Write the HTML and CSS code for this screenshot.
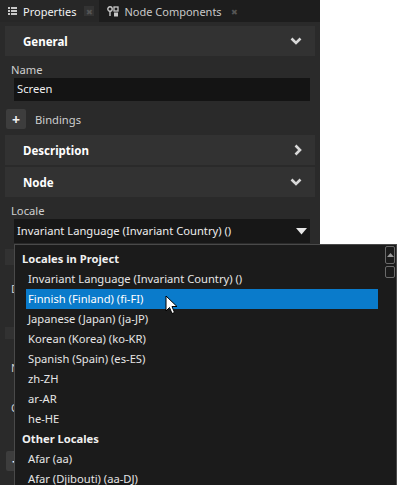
FILE: index.html
```html
<!DOCTYPE html>
<html lang="en">
<head>
    <meta charset="UTF-8">
    <meta name="viewport" content="width=device-width, initial-scale=1.0">
    <title>Properties</title>
    <link rel="stylesheet" href="styles.css">
</head>
<body>
    <div class="panel">
        <div class="tabs">
            <div class="tab active">
                <svg class="tab-icon" width="9" height="8" viewBox="0 0 9 8">
                    <rect x="0" y="0" width="2" height="2" fill="#c8c8c8"/>
                    <rect x="3" y="0" width="6" height="2" fill="#c8c8c8"/>
                    <rect x="0" y="3" width="2" height="2" fill="#c8c8c8"/>
                    <rect x="3" y="3" width="6" height="2" fill="#c8c8c8"/>
                    <rect x="0" y="6" width="2" height="2" fill="#c8c8c8"/>
                    <rect x="3" y="6" width="6" height="2" fill="#c8c8c8"/>
                </svg>
                <span class="tab-label">Properties</span>
                <span class="tab-close boxed">&#x2716;</span>
            </div>
            <div class="tab">
                <svg class="tab-icon" width="12" height="11" viewBox="0 0 12 11">
                    <circle cx="3" cy="3" r="2.2" fill="none" stroke="#c8c8c8" stroke-width="1.4"/>
                    <rect x="2.3" y="5" width="1.4" height="5" fill="#c8c8c8"/>
                    <rect x="7" y="1" width="4" height="4" fill="none" stroke="#c8c8c8" stroke-width="1.3"/>
                    <rect x="7" y="6.5" width="4" height="4" fill="#c8c8c8"/>
                </svg>
                <span class="tab-label">Node Components</span>
                <span class="tab-close">&#x2716;</span>
            </div>
        </div>

        <div class="body">
            <div class="section">
                <span>General</span>
                <svg class="chevron" width="12" height="8" viewBox="0 0 12 8"><polyline points="1.5,1.5 6,6 10.5,1.5" fill="none" stroke="#d8d8d8" stroke-width="2.6"/></svg>
            </div>
            <div class="label">Name</div>
            <div class="input">Screen</div>
            <div class="bindings">
                <span class="plus">+</span>
                <span>Bindings</span>
            </div>
            <div class="section">
                <span>Description</span>
                <svg class="chevron" width="8" height="12" viewBox="0 0 8 12"><polyline points="1.5,1.5 6,6 1.5,10.5" fill="none" stroke="#d8d8d8" stroke-width="2.6"/></svg>
            </div>
            <div class="section">
                <span>Node</span>
                <svg class="chevron" width="12" height="8" viewBox="0 0 12 8"><polyline points="1.5,1.5 6,6 10.5,1.5" fill="none" stroke="#d8d8d8" stroke-width="2.6"/></svg>
            </div>
            <div class="label">Locale</div>
            <div class="input select">
                <span>Invariant Language (Invariant Country) ()</span>
                <svg width="11" height="7" viewBox="0 0 11 7"><polygon points="0,0 11,0 5.5,6.5" fill="#e8e8e8"/></svg>
            </div>

            <!-- rows hidden behind the open dropdown -->
            <div class="hidden-block first"></div>
            <div class="label under depth">Depth</div>
            <div class="hidden-block second"></div>
            <div class="label under name">Name</div>
            <div class="label under opacity">Opacity</div>
            <div class="bindings under-bind">
                <span class="plus">+</span>
                <span>Bindings</span>
            </div>
        </div>
    </div>

    <div class="popup">
        <div class="group">Locales in Project</div>
        <div class="item">Invariant Language (Invariant Country) ()</div>
        <div class="item selected">Finnish (Finland) (fi-FI)</div>
        <div class="item">Japanese (Japan) (ja-JP)</div>
        <div class="item">Korean (Korea) (ko-KR)</div>
        <div class="item">Spanish (Spain) (es-ES)</div>
        <div class="item">zh-ZH</div>
        <div class="item">ar-AR</div>
        <div class="item">he-HE</div>
        <div class="group">Other Locales</div>
        <div class="item">Afar (aa)</div>
        <div class="item">Afar (Djibouti) (aa-DJ)</div>

        <div class="scrollbar">
            <div class="scroll-btn">
                <svg width="7" height="4" viewBox="0 0 7 4"><polygon points="0,4 7,4 3.5,0" fill="#9a9a9a"/></svg>
            </div>
            <div class="scroll-thumb"></div>
        </div>
    </div>

    <svg class="cursor" width="13" height="20" viewBox="0 0 13 20">
        <polygon points="1,1 1,16 4.5,12.5 7,18.5 9.5,17.5 7,11.5 12,11.5" fill="#ffffff" stroke="#000000" stroke-width="1"/>
    </svg>
</body>
</html>
```

FILE: styles.css
```css
body {
    margin: 0;
    background: #ffffff;
    font-family: "Noto Sans", "Open Sans", sans-serif;
    font-size: 11.2px;
    color: #e6e6e6;
    width: 397px;
    height: 485px;
    overflow: hidden;
    position: relative;
}
.panel {
    width: 320px;
    height: 485px;
    background: #2a2a2a;
    overflow: hidden;
}
.tabs {
    display: flex;
    height: 22px;
    background: #1d1d1d;
}
.tab {
    display: flex;
    align-items: center;
    padding: 0 5px 0 8px;
    color: #c8c8c8;
    font-size: 11px;
}
.tab.active {
    background: #272727;
    color: #f2f2f2;
}
.tab-icon {
    flex-shrink: 0;
    margin-right: 5px;
}
.tab.active .tab-icon {
    margin-right: 6px;
}
.tab-label {
    margin-right: 8px;
    white-space: nowrap;
}
.tab-close {
    flex-shrink: 0;
    font-size: 8px;
    color: #555555;
    width: 10px;
    height: 10px;
    display: flex;
    align-items: center;
    justify-content: center;
}
.tab-close.boxed {
    background: #333333;
    color: #555555;
}
.body {
    padding: 4px 5px 0 5px;
}
.section {
    display: flex;
    justify-content: space-between;
    align-items: center;
    height: 30px;
    padding: 0 13px 0 18px;
    margin-bottom: 2px;
    background: #323232;
    font-weight: bold;
    color: #ffffff;
    font-size: 11.5px;
}
.label {
    color: #cfcfcf;
    padding: 3px 0 0 6px;
    height: 17px;
    line-height: 17px;
}
.input {
    margin: 0 5px 0 9px;
    height: 23px;
    line-height: 22px;
    padding-left: 3px;
    background: #141414;
    color: #eeeeee;
}
.select {
    display: flex;
    justify-content: space-between;
    align-items: center;
    height: 24px;
    padding-right: 3px;
    background: #171717;
}
.bindings {
    display: flex;
    align-items: center;
    gap: 9px;
    height: 20px;
    margin: 8px 0 6px 1px;
    color: #cfcfcf;
}
.plus {
    width: 20px;
    height: 20px;
    background: #3d3d3d;
    border-radius: 2px;
    color: #f0f0f0;
    font-weight: bold;
    font-size: 14px;
    display: flex;
    align-items: center;
    justify-content: center;
}
.hidden-block {
    background: #323232;
}
.hidden-block.first {
    height: 16px;
    margin-top: 6px;
}
.hidden-block.second {
    height: 12px;
    margin-top: 30px;
}
.label.depth {
    margin-top: 12px;
}
.label.name {
    margin-top: 17px;
}
.label.opacity {
    margin-top: 20px;
}
.bindings.under-bind {
    margin-top: 35px;
}
.popup {
    position: absolute;
    left: 14px;
    top: 244px;
    width: 381px;
    height: 250px;
    background: #1b1b1b;
    border: 1px solid #4a4a4a;
    padding-top: 4px;
}
.group {
    height: 20px;
    line-height: 20px;
    padding-left: 7px;
    font-weight: bold;
    color: #f0f0f0;
}
.item {
    height: 20px;
    line-height: 20px;
    padding-left: 2px;
    margin-left: 11px;
    margin-right: 18px;
    color: #e6e6e6;
}
.item.selected {
    background: #0a7bcb;
    color: #ffffff;
}
.scrollbar {
    position: absolute;
    right: 1px;
    top: 1px;
    width: 10px;
    display: flex;
    flex-direction: column;
    gap: 2px;
}
.scroll-btn {
    height: 16px;
    border: 1px solid #6a6a6a;
    border-radius: 2px;
    display: flex;
    align-items: center;
    justify-content: center;
}
.scroll-thumb {
    height: 10px;
    border: 1px solid #6a6a6a;
    border-radius: 2px;
}
.cursor {
    position: absolute;
    left: 165px;
    top: 295px;
}
```
